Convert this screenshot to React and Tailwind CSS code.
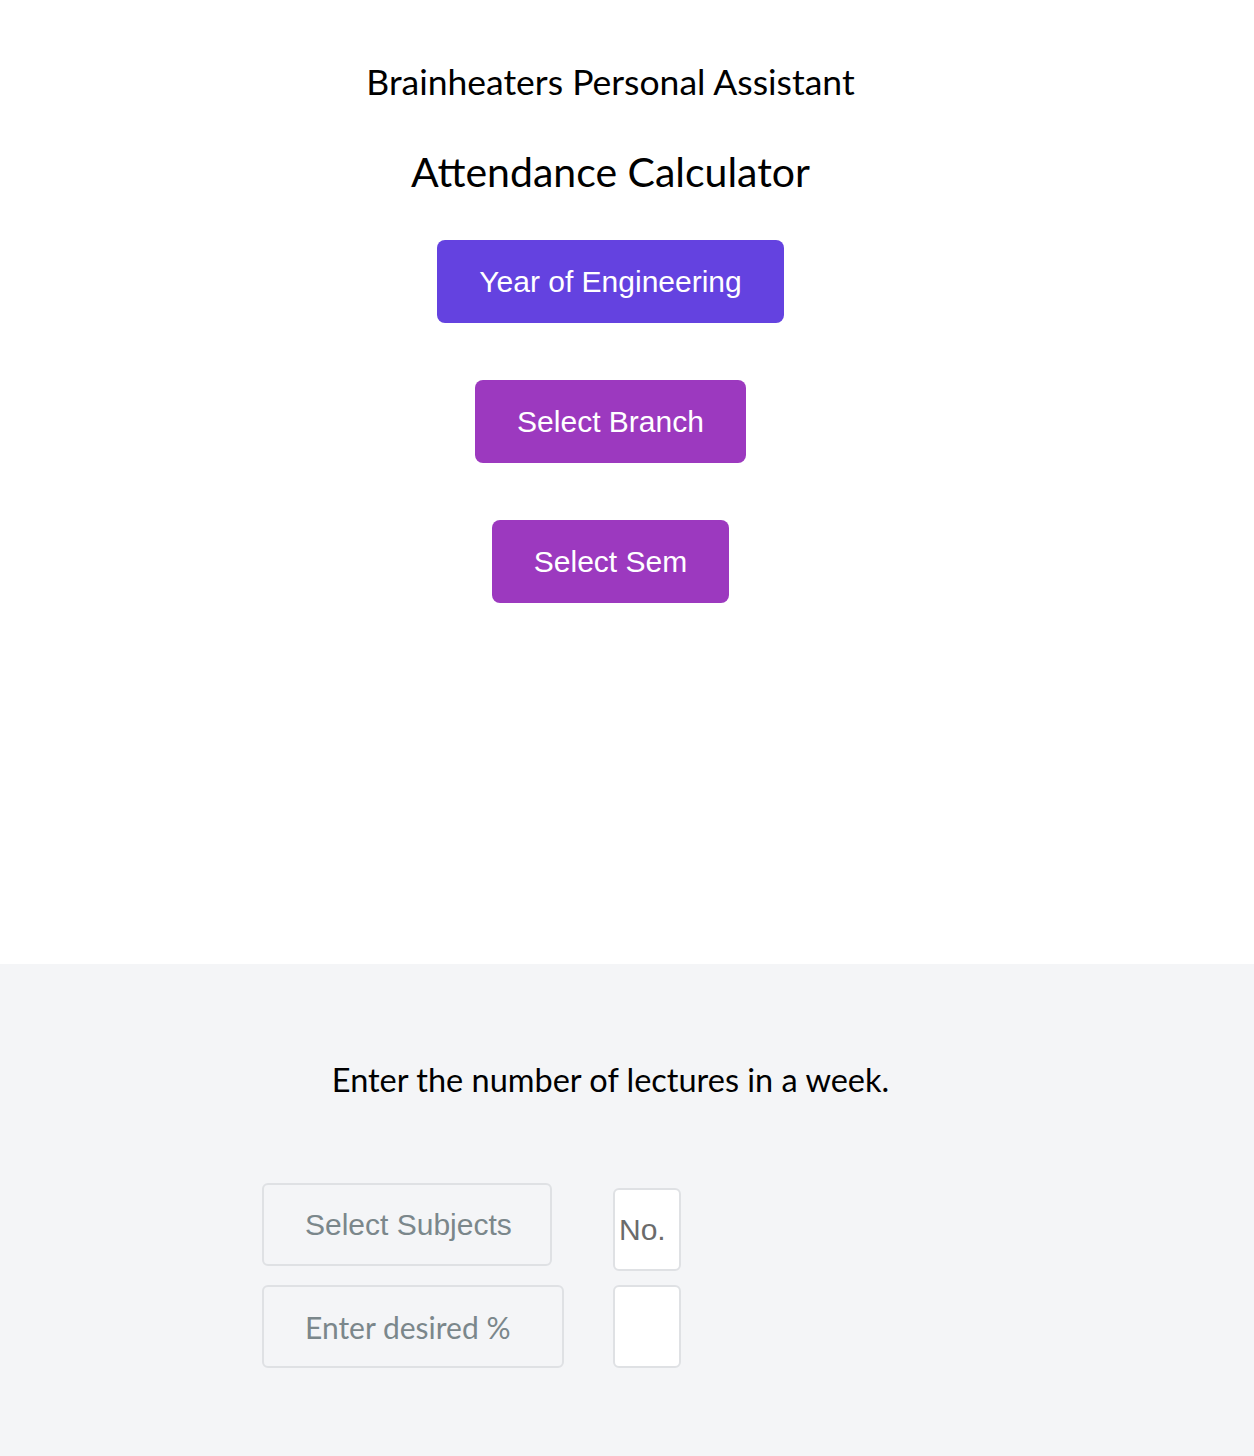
const choices = [
  { label: 'Year of Engineering', tone: 'bg-[#6442e0]' },
  { label: 'Select Branch', tone: 'bg-[#9c39bf]' },
  { label: 'Select Sem', tone: 'bg-[#9c39bf]' },
]

export default function App() {
  return (
    <div className="min-h-[1456px] bg-white font-['Lato',sans-serif] text-black">
      <section className="flex h-[964px] w-[1221px] flex-col items-center">
        <h1 className="mt-[61px] text-[35.5px] leading-[42px]">Brainheaters Personal Assistant</h1>
        <h2 className="mt-[44px] text-[41px] leading-[50px]">Attendance Calculator</h2>
        <div className="mt-[43px] flex flex-col items-center gap-[57px]">
          {choices.map((item) => (
            <button
              key={item.label}
              type="button"
              className={`h-[83px] rounded-lg px-[42px] font-['Liberation_Sans',sans-serif] text-[30px] text-white ${item.tone}`}
            >
              {item.label}
            </button>
          ))}
        </div>
      </section>

      <section className="h-[492px] bg-[#f4f5f7]">
        <div className="flex w-[1221px] flex-col items-center">
          <p className="mt-[96px] text-[32.5px] leading-[40px]">Enter the number of lectures in a week.</p>
        </div>
        <div className="ml-[262px] mt-[83px] flex flex-col gap-[14px]">
          <div className="flex items-start gap-[61px]">
            <input
              placeholder="Select Subjects"
              className="h-[83px] w-[290px] rounded-md border-2 border-[#dfe1e4] bg-transparent pl-[41px] pr-[30px] font-['Liberation_Sans',sans-serif] text-[30px] text-[#7b878b] placeholder:text-[#7b878b] outline-none"
            />
            <input
              placeholder="No."
              className="mt-[5px] h-[83px] w-[68px] rounded-md border-2 border-[#dfe1e4] bg-white px-[4px] font-['Liberation_Sans',sans-serif] text-[30px] placeholder:text-[#6b6b6b] outline-none"
            />
          </div>
          <div className="flex items-start gap-[49px]">
            <input
              placeholder="Enter desired %"
              className="h-[83px] w-[302px] rounded-md border-2 border-[#dfe1e4] bg-transparent px-[41px] text-[30px] text-[#7b878b] placeholder:text-[#7b878b] outline-none"
            />
            <input className="h-[83px] w-[68px] rounded-md border-2 border-[#dfe1e4] bg-white outline-none" />
          </div>
        </div>
      </section>
    </div>
  )
}
